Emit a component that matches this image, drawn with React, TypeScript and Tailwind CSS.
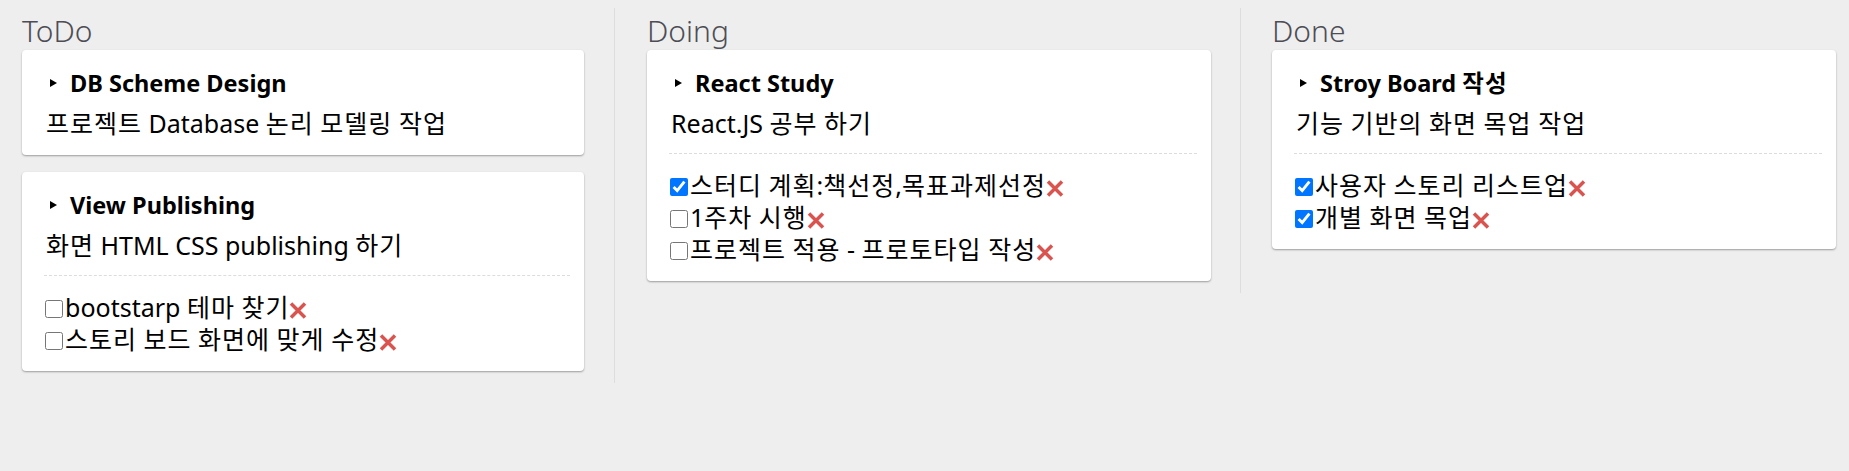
import React from 'react';

type Task = { text: string; done: boolean };
type Card = { title: string; body: string; tasks: Task[] };
type Column = { name: string; cards: Card[] };

const COLUMNS: Column[] = [
  {
    name: 'ToDo',
    cards: [
      { title: 'DB Scheme Design', body: '프로젝트 Database 논리 모델링 작업', tasks: [] },
      {
        title: 'View Publishing',
        body: '화면 HTML CSS publishing 하기',
        tasks: [
          { text: 'bootstarp 테마 찾기', done: false },
          { text: '스토리 보드 화면에 맞게 수정', done: false },
        ],
      },
    ],
  },
  {
    name: 'Doing',
    cards: [
      {
        title: 'React Study',
        body: 'React.JS 공부 하기',
        tasks: [
          { text: '스터디 계획:책선정,목표과제선정', done: true },
          { text: '1주차 시행', done: false },
          { text: '프로젝트 적용 - 프로토타입 작성', done: false },
        ],
      },
    ],
  },
  {
    name: 'Done',
    cards: [
      {
        title: 'Stroy Board 작성',
        body: '기능 기반의 화면 목업 작업',
        tasks: [
          { text: '사용자 스토리 리스트업', done: true },
          { text: '개별 화면 목업', done: true },
        ],
      },
    ],
  },
];

// per-column box widths, taken from the screenshot
const COLUMN_CLASS = [
  'w-[615px] pl-[22px] pr-[30px] border-r',
  'w-[626px] pl-[32px] pr-[29px] border-r',
  'flex-1 pl-[31px] pr-[13px]',
];

// hangul runs get a little tracking so they take the width of the original font
function Hangul({ text }: { text: string }) {
  const parts = text.split(/([가-힣]+)/);
  return (
    <>
      {parts.map((part, i) =>
        /[가-힣]/.test(part) ? (
          <span key={i} className="tracking-[1px]">
            {part}
          </span>
        ) : (
          <React.Fragment key={i}>{part}</React.Fragment>
        )
      )}
    </>
  );
}

function RemoveIcon() {
  return (
    <svg width="18" height="17" viewBox="0 0 18 17" className="mt-[7px] shrink-0">
      <path d="M2 1.5 L16 15.5 M16 1.5 L2 15.5" stroke="#d9534f" strokeWidth="3.5" />
    </svg>
  );
}

function TaskCard({ card }: { card: Card }) {
  return (
    <div className="rounded-[4px] bg-white pt-[17px] pr-[14px] pb-[16px] pl-[22px] shadow-[0_1px_2px_rgba(0,0,0,0.35)]">
      <div className="ml-[6px] flex items-center gap-[13px] text-[23.5px] leading-[32px] font-bold text-black">
        <svg width="7" height="8" viewBox="0 0 7 8" className="shrink-0">
          <polygon points="0,0 7,4 0,8" fill="#000" />
        </svg>
        <span>
          <Hangul text={card.title} />
        </span>
      </div>
      <div className="mt-[8px] ml-[2px] text-[25px] leading-[32px] text-black">
        <Hangul text={card.body} />
      </div>

      {card.tasks.length > 0 && (
        <>
          <div className="mt-[14px] border-t border-dashed border-[#dcdcdc]" />
          <ul className="mt-[15px]">
            {card.tasks.map((task) => (
              <li key={task.text} className="flex items-center text-[25px] leading-[32px] text-black">
                <input
                  type="checkbox"
                  defaultChecked={task.done}
                  className="m-0 mt-[4px] mr-[2px] ml-[1px] h-[18px] w-[18px] shrink-0"
                />
                <span>
                  <Hangul text={task.text} />
                </span>
                <RemoveIcon />
              </li>
            ))}
          </ul>
        </>
      )}
    </div>
  );
}

export default function App() {
  return (
    <div
      className="flex min-h-[471px] items-start bg-[#eeeeee] pt-[8px]"
      style={{ fontFamily: '"Noto Sans", "Noto Sans CJK KR", sans-serif' }}
    >
      {COLUMNS.map((col, i) => (
        <section key={col.name} className={`${COLUMN_CLASS[i]} border-[#dddddd] pt-[6px] pb-[12px]`}>
          <h2 className="mb-[3px] text-[30px] leading-[33px] font-light text-[#4d4d55]">{col.name}</h2>
          <div className="flex flex-col gap-[17px]">
            {col.cards.map((card) => (
              <TaskCard key={card.title} card={card} />
            ))}
          </div>
        </section>
      ))}
    </div>
  );
}
